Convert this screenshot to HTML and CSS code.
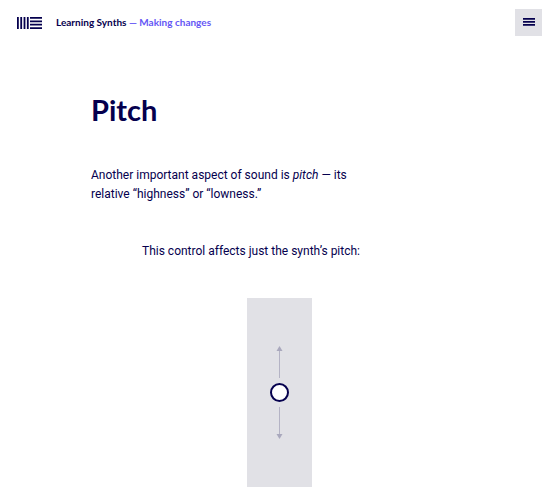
FILE: index.html
```html
<!DOCTYPE html>
<html lang="en">
<head>
  <meta charset="UTF-8">
  <meta name="viewport" content="width=device-width, initial-scale=1.0">
  <title>Pitch | Learning Synths</title>
  <link rel="stylesheet" href="styles.css">
</head>
<body>

<header class="header">
  <a class="logo" href="#" aria-label="Home">
    <svg width="25" height="12" viewBox="0 0 25 12" fill="currentColor">
      <path d="M0 0h1.8v12H0zM3.3 0h1.8v12H3.3zM6.6 0h1.8v12H6.6zM9.9 0h1.8v12H9.9z"/>
      <path d="M13 0h12v1.8H13zM13 3.4h12v1.8H13zM13 6.8h12v1.8H13zM13 10.2h12V12H13z"/>
    </svg>
  </a>
  <nav class="breadcrumb">
    <a href="#">Learning Synths</a>
    <a class="chapter" href="#">— Making changes</a>
  </nav>
  <button class="menu-button" type="button" aria-label="Menu">
    <svg width="12" height="9" viewBox="0 0 12 9" fill="currentColor">
      <path d="M0 0h12v1.7H0zM0 3h12v1.7H0zM0 6h12v1.7H0z"/>
    </svg>
  </button>
</header>

<main class="content">
  <h1>Pitch</h1>
  <p class="intro">Another important aspect of sound is <em>pitch</em> — its relative “highness” or “lowness.”</p>
  <p class="caption"><label for="pitch">This control affects just the synth’s pitch:</label></p>

  <div class="pad">
    <svg class="arrows" width="7" height="93" viewBox="0 0 7 93" fill="#a9a8bd">
      <path d="M3.5 0L6.5 5H.5z"/>
      <path d="M3.5 93L6.5 88H.5z"/>
      <path d="M3 5h1v27H3zM3 61h1v27H3z" opacity=".8"/>
    </svg>
    <input class="slider" id="pitch" type="range" min="0" max="100" value="50">
  </div>
</main>

</body>
</html>
```

FILE: styles.css
```css
* {
  box-sizing: border-box;
}

body {
  margin: 0;
  background: #fff;
  color: #05004e;
  font-family: Roboto, "Liberation Sans", sans-serif;
  font-size: 12px;
  line-height: 19px;
}

a {
  color: inherit;
  text-decoration: none;
}

.header {
  display: flex;
  align-items: center;
  padding: 9px 18px 0 17px;
}

.logo {
  display: flex;
  margin-right: 14px;
}

.breadcrumb {
  font-family: Lato, sans-serif;
  font-size: 10px;
  font-weight: 700;
}

.chapter {
  color: #6456f5;
}

.menu-button {
  display: flex;
  align-items: center;
  justify-content: center;
  width: 27px;
  height: 27px;
  margin-left: auto;
  padding: 0;
  border: 0;
  background: #e1e1e6;
  color: #05004e;
  cursor: pointer;
}

.content {
  max-width: 378px;
  margin: 0 auto;
  padding: 54px 0 14px;
}

h1 {
  margin: 0;
  font-family: Lato, sans-serif;
  font-size: 29px;
  font-weight: 700;
  line-height: 40px;
}

.intro {
  max-width: 270px;
  margin: 36px 0 0;
}

.caption {
  margin: 38px 0 0 51px;
}

.pad {
  display: grid;
  place-items: center;
  width: 65px;
  height: 189px;
  margin: 37px 0 0 156px;
  background: #e1e1e6;
}

.arrows,
.slider {
  grid-area: 1 / 1;
}

.slider {
  appearance: none;
  writing-mode: vertical-lr;
  direction: rtl;
  width: 65px;
  height: 189px;
  margin: 0;
  background: transparent;
  cursor: pointer;
}

.slider::-webkit-slider-thumb {
  appearance: none;
  width: 19px;
  height: 19px;
  border: 2px solid #05004e;
  border-radius: 50%;
  background: #fff;
}
```
